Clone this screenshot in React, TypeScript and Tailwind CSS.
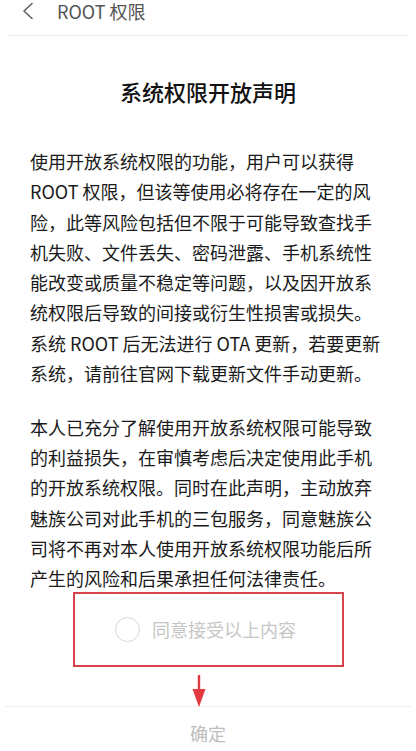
import { useState } from "react";

const para1 = [
  "使用开放系统权限的功能，用户可以获得",
  "ROOT 权限，但该等使用必将存在一定的风",
  "险，此等风险包括但不限于可能导致查找手",
  "机失败、文件丢失、密码泄露、手机系统性",
  "能改变或质量不稳定等问题，以及因开放系",
  "统权限后导致的间接或衍生性损害或损失。",
  "系统 ROOT 后无法进行 OTA 更新，若要更新",
  "系统，请前往官网下载更新文件手动更新。",
];

const para2 = [
  "本人已充分了解使用开放系统权限可能导致",
  "的利益损失，在审慎考虑后决定使用此手机",
  "的开放系统权限。同时在此声明，主动放弃",
  "魅族公司对此手机的三包服务，同意魅族公",
  "司将不再对本人使用开放系统权限功能后所",
  "产生的风险和后果承担任何法律责任。",
];

function Paragraph({ lines }: { lines: string[] }) {
  return (
    <div className="flex flex-col">
      {lines.map((line, i) => (
        <div key={i} className="whitespace-nowrap text-[18px] leading-[30.3px] text-[#1a1a1a]">
          {line}
        </div>
      ))}
    </div>
  );
}

export default function App() {
  const [agreed, setAgreed] = useState(false);

  return (
    <div
      className="relative w-[416px] h-[751px] bg-white overflow-hidden flex flex-col"
      style={{ fontFamily: '"Noto Sans CJK SC", "Noto Sans", sans-serif' }}
    >
      {/* top bar */}
      <div className="h-[36px] mx-[7px] border-b border-[#ececec] flex items-start">
        <svg width="14" height="18" viewBox="0 0 14 18" className="ml-[14px] mt-[2px]">
          <path d="M11 1.5 L3 9 L11 16.5" fill="none" stroke="#606060" strokeWidth="1.6" strokeLinecap="round" strokeLinejoin="round" />
        </svg>
        <div className="ml-[22px] text-[18px] leading-[22px] text-[#555]">ROOT 权限</div>
      </div>

      <div className="mt-[40px] text-center text-[22px] leading-[30px] font-medium text-[#111]">
        系统权限开放声明
      </div>

      <div className="mt-[40px] pl-[30px] flex flex-col gap-[23.5px]">
        <Paragraph lines={para1} />
        <Paragraph lines={para2} />
      </div>

      {/* consent row */}
      <div className="mt-[-2px] ml-[73px] w-[271px] h-[75px] border-2 border-[#d8434c] flex items-center pl-[40px]">
        <button
          onClick={() => setAgreed(!agreed)}
          className={`w-[25px] h-[25px] rounded-full border-[1.5px] ${agreed ? "border-[#3b8cf0] bg-[#3b8cf0]" : "border-[#d8d8d8]"}`}
        />
        <span className="ml-[12px] text-[18px] text-[#c6c6c6]">同意接受以上内容</span>
      </div>

      {/* annotation arrow */}
      <svg width="16" height="34" viewBox="0 0 16 34" className="absolute left-[191px] top-[675px]">
        <rect x="6.8" y="0" width="2.4" height="18" fill="#e23a3f" />
        <path d="M1.5 14 L14.5 14 L8 32 Z" fill="#e23a3f" />
      </svg>

      <div className="mt-[39px] mx-[5px] border-t border-[#eeeeee] flex-1 flex items-start justify-center">
        <button className="mt-[15px] text-[18px] leading-[22px] text-[#bdbdbd]">确定</button>
      </div>
    </div>
  );
}
